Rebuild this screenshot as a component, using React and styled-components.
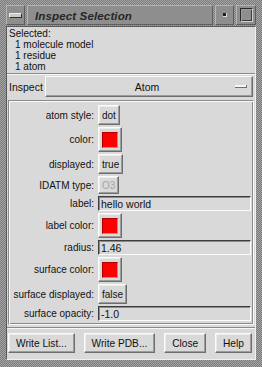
import React from 'react';
import styled, { createGlobalStyle } from 'styled-components';

/* ========== STYLES ========== */
const GlobalStyle = createGlobalStyle`
  html, body {
    margin: 0;
    padding: 0;
    background: #9c9c9c;
  }
  * {
    box-sizing: border-box;
  }
`;

const font = `"Liberation Sans", Arial, Helvetica, sans-serif`;

const stipple = `
  background-color: #a4a4a4;
  background-image: conic-gradient(#7c7c7c 25%, transparent 0 50%, #7c7c7c 0 75%, transparent 0);
  background-size: 2px 2px;
`;

const Window = styled.div`
  ${stipple}
  width: 262px;
  height: 367px;
  padding: 5px 6px 7px 6px;
  display: flex;
  flex-direction: column;
  font-family: ${font};
  font-size: 10px;
  color: #111;
`;

const TitleBar = styled.div`
  height: 20px;
  display: flex;
  gap: 2px;
  margin-bottom: 1px;
`;

const TitleSegment = styled.div`
  background: #8e8e8e;
  border: 1px solid;
  border-color: #b4b4b4 #5e5e5e #5e5e5e #b4b4b4;
  display: flex;
  align-items: center;
  justify-content: ${(p) => (p.center ? 'center' : 'flex-start')};
  width: ${(p) => (p.w ? `${p.w}px` : 'auto')};
  flex: ${(p) => (p.w ? 'none' : '1')};
`;

const Title = styled.span`
  font-family: ${font};
  font-style: italic;
  font-weight: bold;
  font-size: 11.6px;
  color: #262626;
  padding-left: 7px;
  letter-spacing: 0.1px;
`;

const MenuDash = styled.div`
  width: 13px;
  height: 5px;
  background: #c8c8c8;
  border: 1px solid;
  border-color: #eee #2e2e2e #2e2e2e #eee;
`;

const MinDot = styled.div`
  width: 4px;
  height: 4px;
  background: #1c1c1c;
  border-right: 1px solid #ddd;
  border-bottom: 1px solid #ddd;
`;

const MaxBox = styled.div`
  width: 13px;
  height: 14px;
  border: 1px solid;
  border-color: #2a2a2a #d0d0d0 #d0d0d0 #2a2a2a;
  box-shadow: inset 1px 1px 0 #9a9a9a, inset -1px -1px 0 #3a3a3a;
`;

const Body = styled.div`
  flex: 1;
  background: #d9d9d9;
  border: 1px solid;
  border-color: #5a5a5a #f0f0f0 #f0f0f0 #5a5a5a;
  display: flex;
  flex-direction: column;
`;

const Selected = styled.div`
  padding: 1px 0 0 2px;
  line-height: 11px;
  height: 45px;
  div + div {
    padding-left: 6px;
  }
`;

const Separator = styled.div`
  height: 2px;
  margin: ${(p) => p.m || '0'};
  border-top: 1px solid #8a8a8a;
  border-bottom: 1px solid #f7f7f7;
`;

const InspectRow = styled.div`
  display: flex;
  height: 21px;
  margin-top: 1px;
`;

const InspectLabel = styled.div`
  width: 38px;
  display: flex;
  align-items: center;
  padding-left: 2px;
  font-size: 10.5px;
`;

const OptionMenu = styled.div`
  flex: 1;
  margin-right: 2px;
  position: relative;
  display: flex;
  align-items: center;
  justify-content: center;
  border: 1px solid;
  border-color: #fbfbfb #6e6e6e #6e6e6e #fbfbfb;
  box-shadow: inset -1px -1px 0 #9c9c9c;
  font-size: 10.5px;
  padding-right: 4px;
`;

const Indicator = styled.div`
  position: absolute;
  right: 5px;
  top: 8px;
  width: 12px;
  height: 3px;
  background: #f6f6f6;
  border-bottom: 1px solid #6e6e6e;
  border-right: 1px solid #6e6e6e;
`;

const AttrFrame = styled.div`
  margin: 3px 1px 0 1px;
  border: 1px solid;
  border-color: #8a8a8a #fafafa #fafafa #8a8a8a;
  box-shadow: inset 1px 1px 0 #fafafa, inset -1px -1px 0 #8a8a8a;
  padding: 4px 2px 3px 1px;
`;

const AttrGrid = styled.div`
  display: grid;
  grid-template-columns: 84px 1fr;
  column-gap: 4px;
  row-gap: 2px;
`;

const AttrLabel = styled.div`
  text-align: right;
  align-self: center;
  white-space: nowrap;
`;

const ValueCell = styled.div`
  display: flex;
  align-items: center;
  height: ${(p) => p.h}px;
  min-width: 0;
`;

const RaisedButton = styled.div`
  height: ${(p) => p.h || 20}px;
  padding: 0 ${(p) => (p.pad == null ? 3 : p.pad)}px;
  display: flex;
  align-items: center;
  justify-content: center;
  border: 1px solid;
  border-color: #fbfbfb #6e6e6e #6e6e6e #fbfbfb;
  box-shadow: inset -1px -1px 0 #9c9c9c, inset 1px 1px 0 #ececec;
  color: ${(p) => (p.disabled ? '#a6a6a6' : '#111')};
  white-space: nowrap;
`;

const ColorWell = styled.div`
  width: 16px;
  height: 16px;
  background: ${(p) => p.color};
  border: 1px solid;
  border-color: #b00000 #ff7070 #ff7070 #b00000;
  margin: 0 3px;
`;

const Entry = styled.div`
  flex: 1;
  height: 15px;
  border: 1px solid;
  border-color: #3e3e3e #fbfbfb #fbfbfb #3e3e3e;
  box-shadow: inset 1px 1px 0 #8a8a8a;
  padding-left: 2px;
  display: flex;
  align-items: center;
  white-space: nowrap;
  font-size: 10.5px;
`;

const ButtonBar = styled.div`
  display: flex;
  justify-content: space-between;
  margin: 4px 3px 0 1px;
  height: 20px;
`;

const DialogButton = styled(RaisedButton)`
  padding: 0 7px;
  font-size: 10.2px;
`;

/* ========== DATA ========== */
const rows = [
  { label: 'atom style:', kind: 'button', value: 'dot', h: 20 },
  { label: 'color:', kind: 'color', value: '#ff0000', h: 25 },
  { label: 'displayed:', kind: 'button', value: 'true', h: 20 },
  { label: 'IDATM type:', kind: 'button', value: 'O3', h: 18, disabled: true },
  { label: 'label:', kind: 'entry', value: 'hello world', h: 15 },
  { label: 'label color:', kind: 'color', value: '#ff0000', h: 25 },
  { label: 'radius:', kind: 'entry', value: '1.46', h: 15 },
  { label: 'surface color:', kind: 'color', value: '#ff0000', h: 25 },
  { label: 'surface displayed:', kind: 'button', value: 'false', h: 20 },
  { label: 'surface opacity:', kind: 'entry', value: '-1.0', h: 15 },
];

/* ========== COMPONENT ========== */
const App = () => {
  return (
    <>
      <GlobalStyle />
      <Window>
        <TitleBar>
          <TitleSegment w={19} center>
            <MenuDash />
          </TitleSegment>
          <TitleSegment>
            <Title>Inspect Selection</Title>
          </TitleSegment>
          <TitleSegment w={19} center>
            <MinDot />
          </TitleSegment>
          <TitleSegment w={20} center>
            <MaxBox />
          </TitleSegment>
        </TitleBar>
        <Body>
          <Selected>
            <div>Selected:</div>
            <div>1 molecule model</div>
            <div>1 residue</div>
            <div>1 atom</div>
          </Selected>
          <Separator m="1px 0 0 0" />
          <InspectRow>
            <InspectLabel>Inspect</InspectLabel>
            <OptionMenu>
              Atom
              <Indicator />
            </OptionMenu>
          </InspectRow>
          <AttrFrame>
            <AttrGrid>
              {rows.map((r) => (
                <React.Fragment key={r.label}>
                  <AttrLabel>{r.label}</AttrLabel>
                  <ValueCell h={r.h}>
                    {r.kind === 'button' && (
                      <RaisedButton h={r.h} disabled={r.disabled}>
                        {r.value}
                      </RaisedButton>
                    )}
                    {r.kind === 'color' && (
                      <RaisedButton h={r.h} pad={0}>
                        <ColorWell color={r.value} />
                      </RaisedButton>
                    )}
                    {r.kind === 'entry' && <Entry>{r.value}</Entry>}
                  </ValueCell>
                </React.Fragment>
              ))}
            </AttrGrid>
          </AttrFrame>
          <Separator m="2px 0 0 0" />
          <ButtonBar>
            <DialogButton>Write List...</DialogButton>
            <DialogButton>Write PDB...</DialogButton>
            <DialogButton>Close</DialogButton>
            <DialogButton>Help</DialogButton>
          </ButtonBar>
        </Body>
      </Window>
    </>
  );
};

export default App;
